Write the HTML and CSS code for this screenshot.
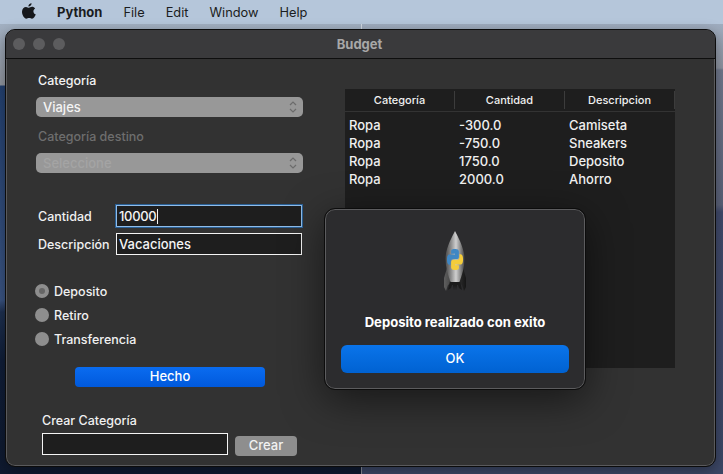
FILE: index.html
```html
<!DOCTYPE html>
<html lang="en">
<head>
  <meta charset="UTF-8">
  <meta name="viewport" content="width=device-width, initial-scale=1.0">
  <title>Budget</title>
  <link rel="stylesheet" href="styles.css">
</head>
<body>
  <div class="menubar">
    <svg class="apple" viewBox="0 0 14 16" width="14" height="16">
      <path d="M9.6 0.2c.1 1.9-1.6 3.4-3.2 3.3-.2-1.7 1.5-3.2 3.2-3.3zM10 3.8c1.2 0 2.4 .6 3.1 1.6-2.5 1.5-2.1 5 .7 6.1-.7 1.6-2.1 4.2-3.8 4.2-1 0-1.5-.7-2.8-.7s-1.9 .7-2.9 .7C2.3 15.7 0 11.8 0 8.7 0 5.6 2 3.9 4 3.9c1.2 0 2.1 .8 2.9 .8 .7 0 1.8-.9 3.1-.9z"/>
    </svg>
    <span class="menu-app">Python</span>
    <span>File</span>
    <span>Edit</span>
    <span>Window</span>
    <span>Help</span>
  </div>

  <div class="window">
    <div class="titlebar">
      <div class="lights"><i></i><i></i><i></i></div>
      <div class="title">Budget</div>
    </div>
    <div class="content">
      <div class="form">
        <div class="label">Categoría</div>
        <div class="select">
          <span>Viajes</span>
          <svg viewBox="0 0 8 14" width="8" height="14"><path d="M1 5l3-3 3 3M1 9l3 3 3-3"/></svg>
        </div>
        <div class="label label-off">Categoría destino</div>
        <div class="select select-off">
          <span>Seleccione</span>
          <svg viewBox="0 0 8 14" width="8" height="14"><path d="M1 5l3-3 3 3M1 9l3 3 3-3"/></svg>
        </div>

        <div class="field field-first">
          <label>Cantidad</label>
          <div class="input input-focus">10000<b class="caret"></b></div>
        </div>
        <div class="field">
          <label>Descripción</label>
          <div class="input">Vacaciones</div>
        </div>

        <div class="radios">
          <div class="radio"><i class="dot on"></i>Deposito</div>
          <div class="radio"><i class="dot"></i>Retiro</div>
          <div class="radio"><i class="dot"></i>Transferencia</div>
        </div>

        <div class="done">Hecho</div>

        <div class="create">
          <div class="create-label">Crear Categoría</div>
          <div class="create-row">
            <div class="input input-create"></div>
            <div class="btn-grey">Crear</div>
          </div>
        </div>
      </div>

      <div class="table">
        <div class="thead">
          <div>Categoría</div>
          <div>Cantidad</div>
          <div>Descripcion</div>
        </div>
        <div class="tbody">
          <div class="row"><span>Ropa</span><span>-300.0</span><span>Camiseta</span></div>
          <div class="row"><span>Ropa</span><span>-750.0</span><span>Sneakers</span></div>
          <div class="row"><span>Ropa</span><span>1750.0</span><span>Deposito</span></div>
          <div class="row"><span>Ropa</span><span>2000.0</span><span>Ahorro</span></div>
        </div>
      </div>
    </div>
  </div>

  <div class="dialog">
    <svg class="rocket" viewBox="0 0 26 62" width="26" height="62">
      <defs>
        <linearGradient id="hull" x1="0" x2="1" y1="0" y2="0">
          <stop offset="0" stop-color="#4a4a4a"/>
          <stop offset="0.3" stop-color="#8f8f8f"/>
          <stop offset="0.55" stop-color="#cfcfcf"/>
          <stop offset="0.8" stop-color="#858585"/>
          <stop offset="1" stop-color="#444"/>
        </linearGradient>
        <linearGradient id="fin" x1="0" x2="1" y1="0" y2="0">
          <stop offset="0" stop-color="#5e5e5e"/>
          <stop offset="1" stop-color="#161616"/>
        </linearGradient>
      </defs>
      <path fill="url(#fin)" d="M5 37 2 47 2 56 4 60 6 54 9 52zM21 37 24 47 24 56 22 60 20 54 17 52z"/>
      <path fill="#1b1b1b" d="M8 50h10l2 9-3-2-1-3h-1l-1 5-1-5-1 5-1-5h-1l-1 3-3 2z"/>
      <path fill="url(#hull)" d="M13 0C16 6 22.5 17 22.5 28 22.5 36 20 44 17.5 51H8.5C6 44 3.5 36 3.5 28 3.5 17 10 6 13 0z"/>
      <g transform="translate(5 18) scale(0.667 0.875)">
        <path fill="#3f87c4" fill-rule="evenodd" d="M14.25.18l.9.2.73.26.59.3.45.32.34.34.25.34.16.33.1.3.04.26.02.2-.01.13V8.5l-.05.63-.13.55-.21.46-.26.38-.3.31-.33.25-.35.19-.35.14-.33.1-.3.07-.26.04-.21.02H8.77l-.69.05-.59.14-.5.22-.41.27-.33.32-.27.35-.2.36-.15.37-.1.35-.07.32-.04.27-.02.21v3.06H3.17l-.21-.03-.28-.07-.32-.12-.35-.18-.36-.26-.36-.36-.35-.46-.32-.59-.28-.73-.21-.88-.14-1.05-.05-1.23.06-1.22.16-1.04.24-.87.32-.71.36-.57.4-.44.42-.33.42-.24.4-.16.36-.1.32-.05.24-.01h.16l.06.01h8.16v-.83H6.18l-.01-2.75-.02-.37.05-.34.11-.31.17-.28.25-.26.31-.23.38-.2.44-.18.51-.15.58-.12.64-.1.71-.06.77-.04.84-.02 1.27.05z"/>
        <path fill="#f5cd3b" fill-rule="evenodd" d="M21.04 6.11l.28.06.32.12.35.18.36.27.36.35.35.47.32.59.28.73.21.88.14 1.04.05 1.23-.06 1.23-.16 1.04-.24.86-.32.71-.36.57-.4.45-.42.33-.42.24-.4.16-.36.09-.32.05-.24.02-.16-.01h-8.22v.82h5.84l.01 2.76.02.36-.05.34-.11.31-.17.29-.25.25-.31.24-.38.2-.44.17-.51.15-.58.13-.64.09-.71.07-.77.04-.84.01-1.27-.04-1.07-.14-.9-.2-.73-.25-.59-.3-.45-.33-.34-.34-.25-.34-.16-.33-.1-.3-.04-.25-.02-.2.01-.13v-5.34l.05-.64.13-.54.21-.46.26-.38.3-.32.33-.24.35-.2.35-.14.33-.1.3-.06.26-.04.21-.02.13-.01h5.84l.69-.05.59-.14.5-.21.41-.28.33-.32.27-.35.2-.36.15-.36.1-.35.07-.32.04-.28.02-.21V6.07h2.09l.14.01z"/>
      </g>
    </svg>
    <div class="dialog-msg">Deposito realizado con exito</div>
    <div class="ok">OK</div>
  </div>
</body>
</html>
```

FILE: styles.css
```css
html, body {
  height: 100%;
}

body {
  margin: 0;
  font-family: Inter, 'Noto Sans', sans-serif;
  font-size: 13px;
  font-weight: 500;
  color: #f0f0f0;
  overflow: hidden;
  position: relative;
  background:
    linear-gradient(180deg, #a9bbd0 0, #90959e 85px, #23406f 86px, #3a5482 300px, #1e3050 312px, #101e38 360px, #0f1a30 100%) left / 50% 100% no-repeat,
    linear-gradient(180deg, #a9bbd0 0, #8d93a0 68px, #70788c 70px, #5a6178 205px, #40496a 212px, #3c4766 100%) right / 50% 100% no-repeat;
}

/* menu bar */
.menubar {
  height: 24px;
  display: flex;
  align-items: center;
  gap: 21px;
  padding-left: 22px;
  background: #b5c6da;
  color: #1a1c20;
  font-size: 12.8px;
  font-weight: 400;
}

.apple {
  fill: #16181c;
  margin-top: -3px;
}

.menu-app {
  font-size: 13px;
  font-weight: 700;
}

/* window */
.window {
  position: absolute;
  left: 5px;
  top: 29px;
  width: 711px;
  height: 438px;
  box-sizing: border-box;
  background: #323232;
  border: 1px solid #0c0c0c;
  border-radius: 10px;
  box-shadow: inset 0 0 0 1px #5a5a5c, 0 4px 14px rgba(0, 0, 0, 0.35);
  overflow: hidden;
}

.titlebar {
  height: 29px;
  box-sizing: border-box;
  position: relative;
  display: flex;
  align-items: center;
  justify-content: center;
  padding-right: 2px;
  background: #3a3a3c;
  border-bottom: 1px solid #0e0e0e;
}

.lights {
  position: absolute;
  left: 7px;
  top: 8px;
  display: flex;
  gap: 8px;
}

.lights i {
  width: 12px;
  height: 12px;
  border-radius: 50%;
  background: #5c5c5e;
}

.title {
  font-weight: 700;
  font-size: 13px;
  color: #a8a8a8;
}

.content {
  display: flex;
}

/* left column */
.form {
  width: 267px;
  margin-left: 30px;
  padding-top: 14px;
}

.label {
  margin-left: 2px;
  height: 16px;
  line-height: 16px;
  font-size: 12.5px;
  color: #f2f2f2;
}

.label-off {
  margin-top: 12px;
  color: #6e6e6e;
}

.select {
  height: 20px;
  margin-top: 8px;
  padding: 0 6px 0 7px;
  display: flex;
  align-items: center;
  justify-content: space-between;
  background: #989898;
  border-radius: 5px;
  color: #f4f4f4;
}

.select svg {
  fill: none;
  stroke: #6c6c6c;
  stroke-width: 1.2;
}

.select-off {
  color: #a4a4a4;
}

.field {
  display: flex;
  align-items: center;
  margin-top: 6px;
}

.field-first {
  margin-top: 32px;
}

.field label {
  width: 78px;
  margin-left: 2px;
  flex-shrink: 0;
  font-size: 12.5px;
}

.input {
  width: 186px;
  height: 22px;
  box-sizing: border-box;
  padding: 0 2px;
  display: flex;
  align-items: center;
  background: #1e1e1e;
  border: 1px solid #f4f4f4;
  color: #f4f4f4;
}

.input-focus {
  border-color: #8fbce8;
  box-shadow: 0 0 0 1px #2a5f94;
  letter-spacing: -0.3px;
}

.caret {
  width: 1px;
  height: 15px;
  margin-left: 1px;
  background: #f4f4f4;
}

.radios {
  margin-top: 24px;
  margin-left: -1px;
}

.radio {
  height: 24px;
  display: flex;
  align-items: center;
  gap: 5px;
  font-size: 12.5px;
}

.dot {
  width: 14px;
  height: 14px;
  border-radius: 50%;
  background: #8e8e8e;
  box-sizing: border-box;
}

.dot.on {
  border: 4px solid #8e8e8e;
  background: #666;
}

.done {
  width: 190px;
  height: 20px;
  margin: 16px 0 0 39px;
  border-radius: 4px;
  background: linear-gradient(180deg, #0a6cf0, #0059dc);
  color: #fff;
  text-align: center;
  line-height: 19px;
}

.create {
  margin: 26px 0 0 6px;
}

.create-label {
  height: 16px;
  line-height: 16px;
  font-size: 12.5px;
}

.create-row {
  display: flex;
  align-items: flex-start;
  gap: 7px;
  margin-top: 4px;
}

.btn-grey {
  width: 62px;
  height: 20px;
  margin-top: 3px;
  border-radius: 4px;
  background: #8e8e8e;
  color: #f2f2f2;
  text-align: center;
  line-height: 19px;
}

/* table */
.table {
  width: 330px;
  height: 279px;
  margin: 30px 0 0 42px;
  background: #1e1e1e;
}

.thead {
  height: 23px;
  box-sizing: border-box;
  display: grid;
  grid-template-columns: repeat(3, 110px);
  align-items: center;
  border-bottom: 1px solid #333;
  font-size: 11px;
}

.thead div {
  height: 18px;
  line-height: 18px;
  text-align: center;
  border-right: 1px solid #3c3c3c;
}

.tbody {
  padding-top: 4px;
}

.row {
  height: 18px;
  line-height: 18px;
  display: grid;
  grid-template-columns: repeat(3, 110px);
}

.row span {
  padding-left: 4px;
}

/* alert */
.dialog {
  position: absolute;
  left: 325px;
  top: 209px;
  width: 260px;
  height: 180px;
  box-sizing: border-box;
  padding: 21px 16px 0;
  display: flex;
  flex-direction: column;
  align-items: center;
  background: #2c2c2e;
  border: 1px solid #5c5c5e;
  outline: 1px solid #0c0c0c;
  border-radius: 10px;
  box-shadow: 0 10px 40px rgba(0, 0, 0, 0.55);
}

.dialog-msg {
  margin-top: 21px;
  font-weight: 700;
  font-size: 13.1px;
  color: #fff;
}

.ok {
  width: 228px;
  height: 28px;
  margin-top: 15px;
  border-radius: 6px;
  background: linear-gradient(180deg, #0a74ea, #0062d2);
  color: #fff;
  text-align: center;
  line-height: 27px;
}
```
